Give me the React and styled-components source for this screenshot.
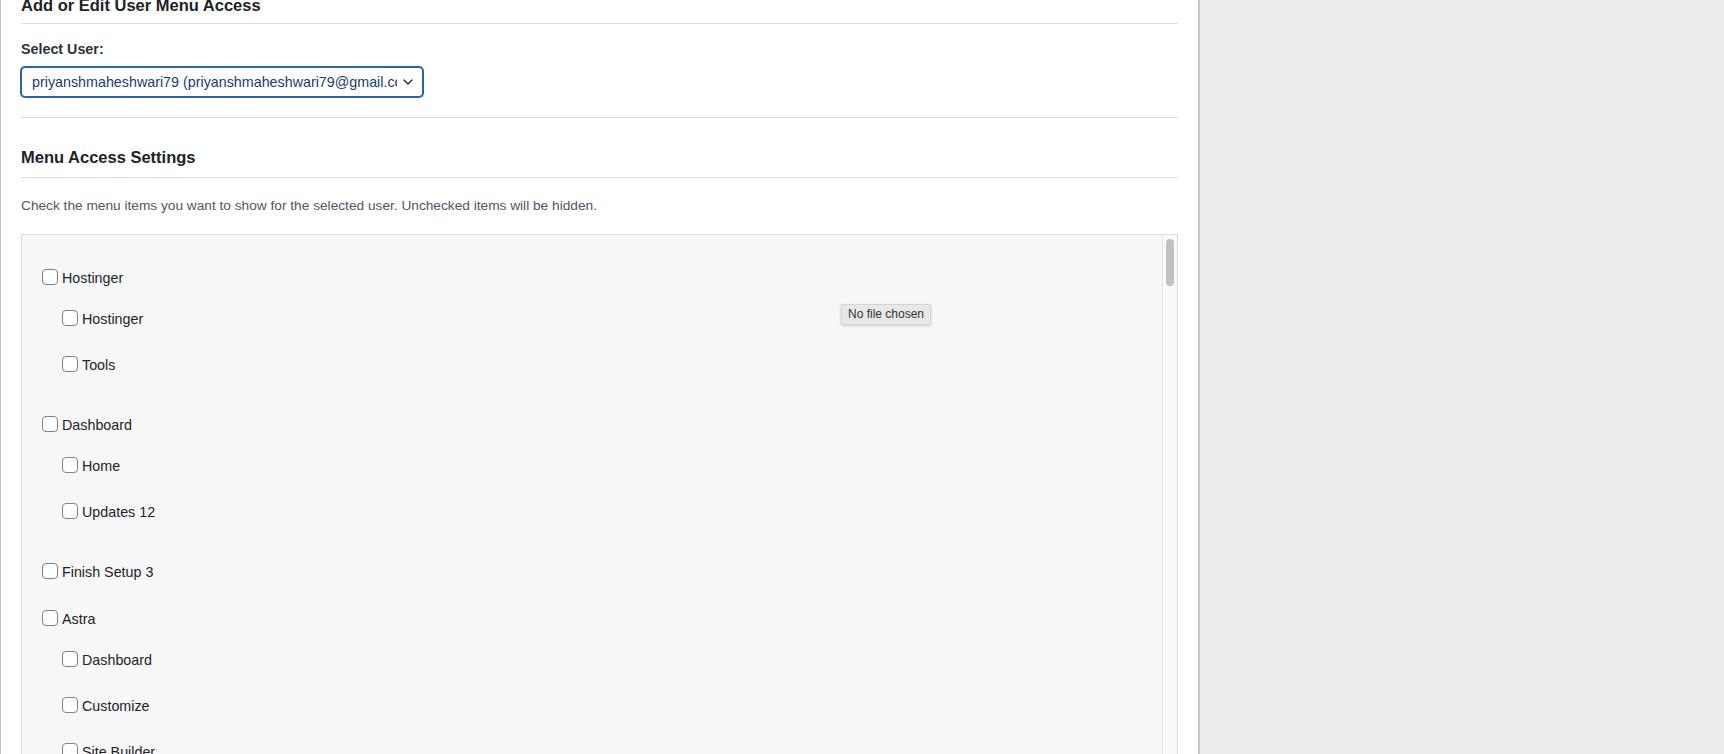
import React from "react";
import styled, { createGlobalStyle } from "styled-components";

const GlobalStyle = createGlobalStyle`
  html,
  body {
    margin: 0;
    height: 100%;
    overflow: hidden;
  }

  body {
    font-family: "Liberation Sans", Arial, sans-serif;
    background-color: #ededed;
    color: #1d2327;
  }
`;

const Page = styled.div`
  display: flex;
  height: 100vh;
`;

const Panel = styled.div`
  width: 1200px;
  flex: none;
  box-sizing: border-box;

  padding: 0 20px;

  border-left: 1px solid #c3c4c7;
  border-right: 2px solid #c8c8c8;

  background-color: #fff;
  overflow: hidden;
`;

const Filler = styled.div`
  flex: 1;
  background-color: #ededed;
`;

const Heading = styled.h2`
  margin: -5px 0 0;
  padding-bottom: 7px;

  font-size: 16.5px;
  font-weight: 700;
  line-height: 21px;
  color: #1d2327;

  border-bottom: 1px solid #dcdcde;
`;

const SectionTitle = styled(Heading)`
  margin-top: 29px;
  padding-bottom: 9px;
`;

const Field = styled.div`
  padding: 15px 0 20px;
  border-bottom: 1px solid #dcdcde;
`;

const FieldLabel = styled.label`
  display: block;
  margin-bottom: 8px;

  font-size: 14.3px;
  font-weight: 700;
  line-height: 20px;
  color: #2c3338;
`;

const Select = styled.div`
  display: flex;
  align-items: center;
  gap: 6px;

  width: 402px;
  height: 30px;
  box-sizing: border-box;
  padding: 0 9px 0 10px;

  border: 1px solid #2c62a6;
  border-radius: 4px;
  box-shadow: 0 0 0 1px #2c62a6;

  background-color: #fff;
`;

const SelectText = styled.span`
  flex: 1;
  overflow: hidden;
  white-space: nowrap;

  font-size: 14.3px;
  line-height: 20px;
  color: #1c3b6a;
`;

const Description = styled.p`
  margin: 19px 0 0;

  font-size: 13.7px;
  line-height: 18px;
  color: #50575e;
`;

const MenuBox = styled.div`
  position: relative;
  display: flex;

  height: 560px;
  margin-top: 19px;

  border: 1px solid #dcdcde;
  background-color: #f7f7f7;
`;

const MenuList = styled.div`
  flex: 1;
  display: flex;
  flex-direction: column;
  gap: 27px;

  padding: 33px 20px;
`;

const Group = styled.div`
  display: flex;
  flex-direction: column;
`;

const SubList = styled.div`
  display: flex;
  flex-direction: column;
  gap: 26px;

  padding: 21px 0 13px;
`;

const Row = styled.label`
  display: flex;
  align-items: center;
  gap: 4px;

  height: 20px;
  margin-left: ${(p) => (p.$nested ? "20px" : "0")};

  font-size: 14.3px;
  line-height: 20px;
  color: #1d2327;
`;

const Check = styled.input.attrs({ type: "checkbox" })`
  appearance: none;
  flex: none;

  width: 16px;
  height: 16px;
  margin: -3px 0 0;

  border: 1px solid #808080;
  border-radius: 4px;
  background-color: #fff;
`;

const ScrollTrack = styled.div`
  width: 15px;
  flex: none;
  box-sizing: border-box;
  padding: 4px 3px 0 3px;

  border-left: 1px solid #e4e4e4;
  background-color: #fafafa;
`;

const ScrollThumb = styled.div`
  width: 8px;
  height: 47px;
  border-radius: 4px;
  background-color: #c1c1c1;
`;

const Tooltip = styled.div`
  position: absolute;
  left: 819px;
  top: 69px;

  height: 19px;
  padding: 0 6px;

  font-size: 12px;
  line-height: 19px;
  color: #333;

  border: 1px solid #d4d4d4;
  border-radius: 2px;
  background-color: #e8e8e8;
  box-shadow: 0 1px 3px rgba(0, 0, 0, 0.18);
`;

const menu = [
  { label: "Hostinger", children: ["Hostinger", "Tools"] },
  { label: "Dashboard", children: ["Home", "Updates 12"] },
  { label: "Finish Setup 3", children: [] },
  {
    label: "Astra",
    children: ["Dashboard", "Customize", "Site Builder", "Custom Layouts"],
  },
  { label: "Posts", children: ["All Posts", "Add New Post"] },
];

function Chevron() {
  return (
    <svg width="10" height="6" viewBox="0 0 10 6" fill="none">
      <polyline
        points="1,1 5,5 9,1"
        stroke="#1d2327"
        strokeWidth="1.3"
        strokeLinecap="round"
        strokeLinejoin="round"
      />
    </svg>
  );
}

function App() {
  return (
    <Page>
      <GlobalStyle />
      <Panel>
        <Heading>Add or Edit User Menu Access</Heading>
        <Field>
          <FieldLabel>Select User:</FieldLabel>
          <Select>
            <SelectText>
              priyanshmaheshwari79 (priyanshmaheshwari79@gmail.com)
            </SelectText>
            <Chevron />
          </Select>
        </Field>

        <SectionTitle>Menu Access Settings</SectionTitle>
        <Description>
          Check the menu items you want to show for the selected user.
          Unchecked items will be hidden.
        </Description>

        <MenuBox>
          <MenuList>
            {menu.map((group) => (
              <Group key={group.label}>
                <Row>
                  <Check />
                  {group.label}
                </Row>
                {group.children.length > 0 && (
                  <SubList>
                    {group.children.map((child) => (
                      <Row $nested key={child}>
                        <Check />
                        {child}
                      </Row>
                    ))}
                  </SubList>
                )}
              </Group>
            ))}
          </MenuList>
          <ScrollTrack>
            <ScrollThumb />
          </ScrollTrack>
          <Tooltip>No file chosen</Tooltip>
        </MenuBox>
      </Panel>
      <Filler />
    </Page>
  );
}

export default App;
